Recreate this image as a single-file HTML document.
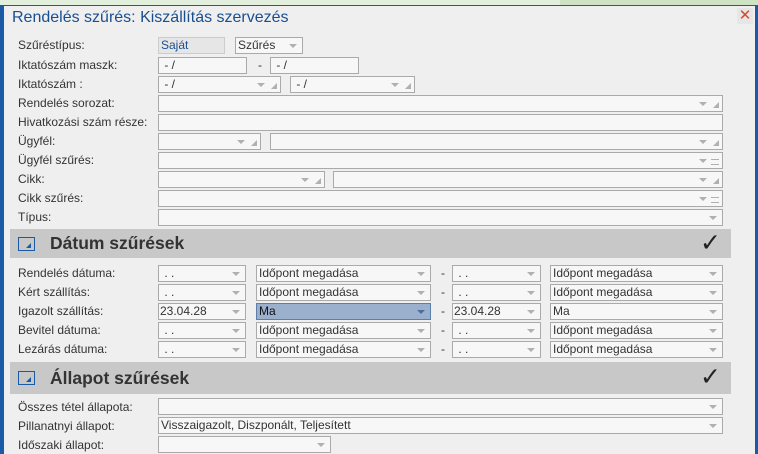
<!DOCTYPE html>
<html><head><meta charset="utf-8"><style>
*{margin:0;padding:0;box-sizing:border-box}
body{width:758px;height:454px;overflow:hidden;background:#efefef;font-family:"Liberation Sans",sans-serif;font-size:12px;color:#333;position:relative}
.top{position:absolute;left:0;top:0;width:758px;height:5px;background:#e2efdc}
.top2{position:absolute;left:560px;top:0;width:198px;height:5px;background:#cde3c4}
.lb{position:absolute;left:0;top:5px;width:4px;height:449px;background:#1b5aa6}
.rb{position:absolute;left:755px;top:5px;width:3px;height:449px;background:#1b5aa6}
.tb{position:absolute;left:0;top:5px;width:758px;height:1px;background:#1b5aa6}
.title{position:absolute;left:12px;top:9px;font-size:16px;color:#1a4f8f}
.x{position:absolute;left:737px;top:8px;width:16px;height:16px;background:#e6e6e6;color:#d24a32;font-size:15px;line-height:16px;text-align:center}
.l{position:absolute;left:18px;line-height:14px}
.b{position:absolute;height:17px;border:1px solid #aaa;background:#f7f7f7;line-height:15px;padding-left:2px;white-space:nowrap;overflow:hidden}
.ar{position:absolute;right:5px;top:6px;width:0;height:0;border-left:4px solid transparent;border-right:4px solid transparent;border-top:4px solid #b0b0b0}
.c .ar,.e .ar{right:15px}
.c::after{content:"";position:absolute;right:3px;bottom:3px;border-left:6px solid transparent;border-bottom:6px solid #b0b0b0}
.e::after{content:"";position:absolute;right:3px;top:6px;width:8px;height:4px;border-top:1px solid #b0b0b0;border-bottom:1px solid #b0b0b0}
.d{position:absolute;line-height:14px}
.h{position:absolute;left:10px;width:721px;background:#c8c8c8}
.h .ic{position:absolute;left:8px;width:17px;height:14px;border:1px solid #1b5aa6}
.h .ic::after{content:"";position:absolute;right:3px;bottom:2px;border-left:5px solid transparent;border-bottom:5px solid #1b5aa6}
.h .t{position:absolute;left:40px;font-size:17.5px;font-weight:bold;color:#333}
.h .ck{position:absolute;right:10px;font-size:25px;color:#222}
.sel{background:#9ab0cd;border-color:#5b7fad}
</style></head><body>
<div class="top"></div><div class="top2"></div><div class="tb"></div><div class="lb"></div><div class="rb"></div>
<div class="title">Rendelés szűrés: Kiszállítás szervezés</div>
<div class="x">✕</div>

<div class="l" style="top:38px">Szűréstípus:</div>
<div class="b" style="left:158px;top:37px;width:67px;background:#e6e6e6;border-color:#ccc;color:#1a4f8f">Saját</div>
<div class="b" style="left:235px;top:37px;width:68px">Szűrés<span class="ar"></span></div>

<div class="l" style="top:58px">Iktatószám maszk:</div>
<div class="b" style="left:158px;top:57px;width:89px">&nbsp;- /</div>
<div class="d" style="left:258px;top:58px">-</div>
<div class="b" style="left:270px;top:57px;width:89px">&nbsp;- /</div>

<div class="l" style="top:77px">Iktatószám :</div>
<div class="b c" style="left:158px;top:76px;width:123px">&nbsp;- /<span class="ar"></span></div>
<div class="b c" style="left:290px;top:76px;width:125px">&nbsp;- /<span class="ar"></span></div>

<div class="l" style="top:96px">Rendelés sorozat:</div>
<div class="b c" style="left:158px;top:95px;width:565px"><span class="ar"></span></div>
<div class="l" style="top:115px">Hivatkozási szám része:</div>
<div class="b" style="left:158px;top:114px;width:565px"></div>

<div class="l" style="top:134px">Ügyfél:</div>
<div class="b c" style="left:158px;top:133px;width:103px"><span class="ar"></span></div>
<div class="b c" style="left:270px;top:133px;width:453px"><span class="ar"></span></div>
<div class="l" style="top:153px">Ügyfél szűrés:</div>
<div class="b e" style="left:158px;top:152px;width:565px"><span class="ar"></span></div>

<div class="l" style="top:172px">Cikk:</div>
<div class="b c" style="left:158px;top:171px;width:167px"><span class="ar"></span></div>
<div class="b c" style="left:333px;top:171px;width:390px"><span class="ar"></span></div>
<div class="l" style="top:191px">Cikk szűrés:</div>
<div class="b e" style="left:158px;top:190px;width:565px"><span class="ar"></span></div>
<div class="l" style="top:210px">Típus:</div>
<div class="b" style="left:158px;top:209px;width:565px"><span class="ar"></span></div>

<div class="h" style="top:229px;height:29px"><div class="ic" style="top:8px"></div><div class="t" style="top:4px">Dátum szűrések</div><div class="ck" style="top:-1px">✓</div></div>

<div class="l" style="top:266px">Rendelés dátuma:</div>
<div class="b" style="left:158px;top:265px;width:88px">&nbsp;. .<span class="ar"></span></div>
<div class="b" style="left:256px;top:265px;width:175px">Időpont megadása<span class="ar"></span></div>
<div class="d" style="left:441px;top:266px">-</div>
<div class="b" style="left:452px;top:265px;width:89px">&nbsp;. .<span class="ar"></span></div>
<div class="b" style="left:550px;top:265px;width:173px">Időpont megadása<span class="ar"></span></div>

<div class="l" style="top:285px">Kért szállítás:</div>
<div class="b" style="left:158px;top:284px;width:88px">&nbsp;. .<span class="ar"></span></div>
<div class="b" style="left:256px;top:284px;width:175px">Időpont megadása<span class="ar"></span></div>
<div class="d" style="left:441px;top:285px">-</div>
<div class="b" style="left:452px;top:284px;width:89px">&nbsp;. .<span class="ar"></span></div>
<div class="b" style="left:550px;top:284px;width:173px">Időpont megadása<span class="ar"></span></div>

<div class="l" style="top:304px">Igazolt szállítás:</div>
<div class="b" style="left:158px;top:303px;width:88px;padding-left:1px">23.04.28<span class="ar"></span></div>
<div class="b sel" style="left:256px;top:303px;width:175px;color:#111">Ma<span class="ar" style="border-top-color:#4a6f9f"></span></div>
<div class="d" style="left:441px;top:304px">-</div>
<div class="b" style="left:452px;top:303px;width:89px;padding-left:1px">23.04.28<span class="ar"></span></div>
<div class="b" style="left:550px;top:303px;width:173px">Ma<span class="ar"></span></div>

<div class="l" style="top:323px">Bevitel dátuma:</div>
<div class="b" style="left:158px;top:322px;width:88px">&nbsp;. .<span class="ar"></span></div>
<div class="b" style="left:256px;top:322px;width:175px">Időpont megadása<span class="ar"></span></div>
<div class="d" style="left:441px;top:323px">-</div>
<div class="b" style="left:452px;top:322px;width:89px">&nbsp;. .<span class="ar"></span></div>
<div class="b" style="left:550px;top:322px;width:173px">Időpont megadása<span class="ar"></span></div>

<div class="l" style="top:342px">Lezárás dátuma:</div>
<div class="b" style="left:158px;top:341px;width:88px">&nbsp;. .<span class="ar"></span></div>
<div class="b" style="left:256px;top:341px;width:175px">Időpont megadása<span class="ar"></span></div>
<div class="d" style="left:441px;top:342px">-</div>
<div class="b" style="left:452px;top:341px;width:89px">&nbsp;. .<span class="ar"></span></div>
<div class="b" style="left:550px;top:341px;width:173px">Időpont megadása<span class="ar"></span></div>

<div class="h" style="top:362px;height:32px"><div class="ic" style="top:9px"></div><div class="t" style="top:6px">Állapot szűrések</div><div class="ck" style="top:0px">✓</div></div>

<div class="l" style="top:400px">Összes tétel állapota:</div>
<div class="b" style="left:158px;top:398px;width:565px"><span class="ar"></span></div>
<div class="l" style="top:419px">Pillanatnyi állapot:</div>
<div class="b" style="left:158px;top:417px;width:565px">Visszaigazolt, Diszponált, Teljesített<span class="ar"></span></div>
<div class="l" style="top:438px">Időszaki állapot:</div>
<div class="b" style="left:158px;top:436px;width:173px"><span class="ar"></span></div>
</body></html>
